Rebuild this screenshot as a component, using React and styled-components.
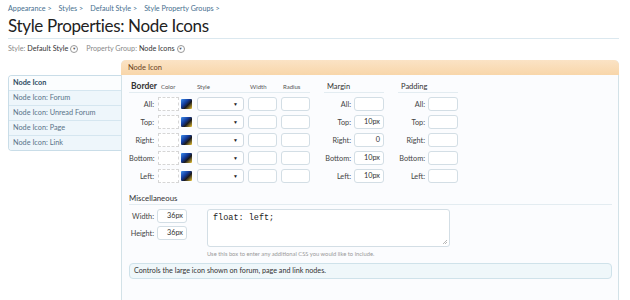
import React from "react";
import styled, { createGlobalStyle } from "styled-components";

const GlobalStyle = createGlobalStyle`
  body {
    margin: 0;
    background: #fff;
    font-family: Lato, "Open Sans", sans-serif;
    color: #333;
  }
`;

const Page = styled.div`
  width: 630px;
  height: 300px;
  overflow: hidden;
  box-sizing: border-box;
  padding: 3px 11px 0 8px;
`;

const Breadcrumb = styled.div`
  display: flex;
  gap: 7px;
  font-size: 7.2px;
  line-height: 12px;
  color: #47708f;
`;

const Title = styled.h1`
  margin: 0;
  padding-bottom: 1px;
  font-size: 17px;
  letter-spacing: -0.35px;
  font-weight: normal;
  line-height: 22px;
  color: #222;
  border-bottom: 1px solid #dbe8ef;
`;

const FilterBar = styled.div`
  display: flex;
  align-items: center;
  gap: 8px;
  margin-top: 5px;
  font-size: 7.2px;
  line-height: 10px;
  color: #8a8a8a;
`;

const FilterItem = styled.span`
  display: flex;
  align-items: center;
  gap: 2px;
  b {
    font-weight: normal;
    color: #333;
  }
`;

const DropCircle = styled.span`
  display: inline-flex;
  align-items: center;
  justify-content: center;
  width: 8px;
  height: 8px;
  border: 1px solid #999;
  border-radius: 50%;
  font-size: 4px;
  color: #555;
  box-sizing: border-box;
`;

const Main = styled.div`
  display: flex;
  margin-top: 6px;
`;

const TabList = styled.ul`
  list-style: none;
  margin: 15px 0 0;
  padding: 0;
  width: 112px;
  align-self: flex-start;
  border: 1px solid #c9dde8;
  border-right: none;
  border-radius: 4px 0 0 4px;
  overflow: hidden;
`;

const Tab = styled.li`
  height: 14px;
  line-height: 14px;
  padding-left: 4px;
  font-size: 7.3px;
  color: ${(p) => (p.$active ? "#2d4a62" : "#5a7389")};
  font-weight: ${(p) => (p.$active ? 700 : "normal")};
  background: ${(p) => (p.$active ? "#fbfdfe" : "#eef6fb")};
  border-top: ${(p) => (p.$first ? "none" : "1px solid #d5e6f0")};
`;

const Panel = styled.div`
  flex: 1;
  height: 250px;
  border: 1px solid #d3e2e8;
  border-top: none;
  border-radius: 5px 5px 0 0;
  background: #fbfcfe;
`;

const PanelHeader = styled.div`
  height: 15px;
  line-height: 15px;
  margin: 0 -1px;
  padding-left: 7px;
  font-size: 7.5px;
  color: #6b4526;
  background: linear-gradient(#fbe3c5, #f8d6aa);
  border-radius: 5px 5px 0 0;
`;

const PanelBody = styled.div`
  padding: 5px 6px 0 7px;
`;

const Groups = styled.div`
  display: flex;
  gap: 14px;
`;

const Grid = styled.div`
  display: grid;
  grid-template-columns: ${(p) => p.$cols};
  column-gap: ${(p) => p.$gap || "3px"};
  row-gap: ${(p) => p.$rowGap || "4px"};
  align-items: center;
`;

const HeadRow = styled.div`
  grid-column: 1 / -1;
  display: grid;
  grid-template-columns: inherit;
  column-gap: inherit;
  height: 12px;
  align-items: center;
  border-bottom: 1px solid #e3ecf1;
`;

const GroupTitle = styled.span`
  font-size: ${(p) => (p.$big ? "8.5px" : "7.5px")};
  font-weight: ${(p) => (p.$big ? 700 : "normal")};
  color: #333;
  white-space: nowrap;
  padding-left: ${(p) => p.$pad || "0"};
`;

const ColHead = styled.span`
  font-size: 6px;
  color: #555;
  padding-left: ${(p) => p.$pad || "0"};
`;

const Label = styled.label`
  text-align: right;
  font-size: 7.3px;
  color: #444;
  white-space: nowrap;
`;

const TextBox = styled.div`
  height: 14px;
  box-sizing: border-box;
  border: 1px solid #d3dee5;
  border-radius: 3px;
  background: #fff;
  font-size: 7.3px;
  line-height: 12px;
  text-align: right;
  padding-right: 3px;
  color: #333;
`;

const ColorCell = styled.div`
  display: flex;
  align-items: center;
  gap: 2px;
`;

const ColorInput = styled.div`
  width: 21px;
  height: 14px;
  box-sizing: border-box;
  border: 1px dashed #d6d6d6;
  background: #fff;
`;

const Swatch = styled.div`
  width: 11px;
  height: 10px;
  border-radius: 1px;
  background: linear-gradient(135deg, #3d8ff0 0%, #123a9a 40%, #1a1a20 62%, #f0c830 100%);
`;

const Select = styled.div`
  height: 14px;
  box-sizing: border-box;
  border: 1px solid #d0dae2;
  border-radius: 3px;
  background: #fff;
  display: flex;
  align-items: center;
  justify-content: flex-end;
  padding-right: 5px;
  font-size: 5px;
  color: #222;
`;

const Misc = styled.div`
  margin-top: 9px;
`;

const MiscTitle = styled.div`
  font-size: 7.8px;
  line-height: 12px;
  color: #333;
  border-bottom: 1px solid #e3ecf1;
`;

const MiscRow = styled.div`
  display: flex;
  align-items: flex-start;
  gap: 20px;
  margin-top: 4px;
`;

const CssCol = styled.div`
  display: flex;
  flex-direction: column;
`;

const CssArea = styled.div`
  position: relative;
  width: 243px;
  height: 38px;
  box-sizing: border-box;
  border: 1px solid #d3dee5;
  border-radius: 3px;
  background: #fff;
  padding: 3px 5px;
  font-family: "Liberation Mono", "DejaVu Sans Mono", monospace;
  font-size: 8.5px;
  color: #222;
`;

const Grip = styled.svg`
  position: absolute;
  right: 1px;
  bottom: 1px;
`;

const Hint = styled.div`
  margin-top: 3px;
  font-size: 5.8px;
  line-height: 8px;
  color: #999;
`;

const Explain = styled.div`
  margin-top: 5px;
  height: 16px;
  box-sizing: border-box;
  border: 1px solid #cfe2ea;
  border-radius: 4px;
  background: #eff7fa;
  padding-left: 4px;
  font-size: 7.2px;
  line-height: 14px;
  color: #333;
`;

const sides = ["All", "Top", "Right", "Bottom", "Left"];
const margins = { Top: "10px", Right: "0", Bottom: "10px", Left: "10px" };

function BoxGroup({ title, values = {} }) {
  return (
    <Grid $cols="27px 30px">
      <HeadRow>
        <GroupTitle $pad="3px">{title}</GroupTitle>
      </HeadRow>
      {sides.map((s) => (
        <React.Fragment key={s}>
          <Label>{s}:</Label>
          <TextBox>{values[s] || ""}</TextBox>
        </React.Fragment>
      ))}
    </Grid>
  );
}

export default function App() {
  return (
    <Page>
      <GlobalStyle />
      <Breadcrumb>
        <span>Appearance &gt;</span>
        <span>Styles &gt;</span>
        <span>Default Style &gt;</span>
        <span>Style Property Groups &gt;</span>
      </Breadcrumb>
      <Title>Style Properties: Node Icons</Title>
      <FilterBar>
        <FilterItem>
          Style: <b>Default Style</b> <DropCircle>▼</DropCircle>
        </FilterItem>
        <FilterItem>
          Property Group: <b>Node Icons</b> <DropCircle>▼</DropCircle>
        </FilterItem>
      </FilterBar>
      <Main>
        <TabList>
          <Tab $active $first>Node Icon</Tab>
          <Tab>Node Icon: Forum</Tab>
          <Tab>Node Icon: Unread Forum</Tab>
          <Tab>Node Icon: Page</Tab>
          <Tab>Node Icon: Link</Tab>
        </TabList>
        <Panel>
          <PanelHeader>Node Icon</PanelHeader>
          <PanelBody>
            <Groups>
              <Grid $cols="25px 35px 47px 29px 29px" $gap="4px">
                <HeadRow>
                  <GroupTitle $big $pad="2px">Border</GroupTitle>
                  <ColHead $pad="3px">Color</ColHead>
                  <ColHead>Style</ColHead>
                  <ColHead $pad="2px">Width</ColHead>
                  <ColHead $pad="2px">Radius</ColHead>
                </HeadRow>
                {sides.map((s) => (
                  <React.Fragment key={s}>
                    <Label>{s}:</Label>
                    <ColorCell>
                      <ColorInput />
                      <Swatch />
                    </ColorCell>
                    <Select>▼</Select>
                    <TextBox />
                    <TextBox />
                  </React.Fragment>
                ))}
              </Grid>
              <BoxGroup title="Margin" values={margins} />
              <BoxGroup title="Padding" />
            </Groups>
            <Misc>
              <MiscTitle>Miscellaneous</MiscTitle>
              <MiscRow>
                <Grid $cols="25px 30px" $rowGap="3px">
                  <Label>Width:</Label>
                  <TextBox>36px</TextBox>
                  <Label>Height:</Label>
                  <TextBox>36px</TextBox>
                </Grid>
                <CssCol>
                  <CssArea>
                    float: left;
                    <Grip width="6" height="6" viewBox="0 0 6 6">
                      <path d="M1 5L5 1M3 5L5 3" stroke="#999" strokeWidth="0.7" />
                    </Grip>
                  </CssArea>
                  <Hint>Use this box to enter any additional CSS you would like to include.</Hint>
                </CssCol>
              </MiscRow>
              <Explain>Controls the large icon shown on forum, page and link nodes.</Explain>
            </Misc>
          </PanelBody>
        </Panel>
      </Main>
    </Page>
  );
}
